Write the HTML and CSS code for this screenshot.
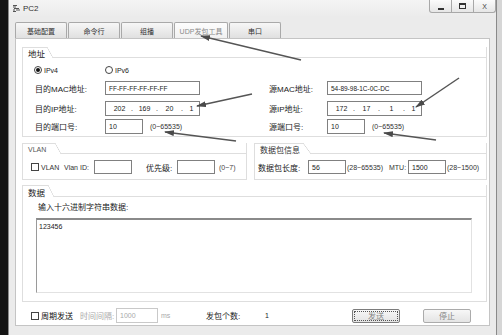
FILE: index.html
```html
<!DOCTYPE html>
<html lang="zh">
<head>
    <title>PC2</title>
    <meta charset="UTF-8" />
    <link rel="stylesheet" href="styles.css">
</head>
<body>
    <div class="screen">
        <div class="edge-left"></div>
        <div class="window">
            <div class="titlebar">
                <svg class="app-icon" width="9" height="9" viewBox="0 0 9 9">
                    <path d="M1 1.5h4M1 3h3M2 4.5h5M1 6h2M4 6h4M1 7.5h3" stroke="#555" stroke-width="1" fill="none"/>
                </svg>
                <span class="title">PC2</span>
                <div class="win-buttons">
                    <span class="wbtn"><span class="ico-min"></span></span>
                    <span class="wbtn"><span class="ico-max"></span></span>
                    <span class="wbtn close">X</span>
                </div>
            </div>

            <div class="tabs">
                <div class="tab">基础配置</div>
                <div class="tab">命令行</div>
                <div class="tab">组播</div>
                <div class="tab active">UDP发包工具</div>
                <div class="tab">串口</div>
            </div>

            <div class="panel">
                <div class="group addr">
                    <div class="group-head">
                        <span class="group-label big" style="width: 24px">地址</span>
                        <span class="group-slant"></span>
                        <span class="group-fill"></span>
                    </div>
                    <div class="addr-body">
                        <div class="radio-row">
                            <span class="radio checked"></span><span class="radio-text">IPv4</span>
                            <span class="radio"></span><span class="radio-text">IPv6</span>
                        </div>
                        <div class="addr-row mac-row">
                            <div class="half left">
                                <span class="lbl">目的MAC地址:</span>
                                <span class="field wide">FF-FF-FF-FF-FF-FF</span>
                            </div>
                            <div class="half right">
                                <span class="lbl">源MAC地址:</span>
                                <span class="field wide">54-89-98-1C-0C-DC</span>
                            </div>
                        </div>
                        <div class="addr-row ip-row">
                            <div class="half left">
                                <span class="lbl">目的IP地址:</span>
                                <span class="field wide ip">
                                    <span class="oct">202</span><span class="dot">.</span><span class="oct">169</span><span class="dot">.</span><span class="oct">20</span><span class="dot">.</span><span class="oct last">1</span>
                                </span>
                            </div>
                            <div class="half right">
                                <span class="lbl">源IP地址:</span>
                                <span class="field wide ip">
                                    <span class="oct">172</span><span class="dot">.</span><span class="oct">17</span><span class="dot">.</span><span class="oct">1</span><span class="dot">.</span><span class="oct last">1</span>
                                </span>
                            </div>
                        </div>
                        <div class="addr-row port-row">
                            <div class="half left">
                                <span class="lbl">目的端口号:</span>
                                <span class="field port">10</span>
                                <span class="range">(0~65535)</span>
                            </div>
                            <div class="half right">
                                <span class="lbl">源端口号:</span>
                                <span class="field port">10</span>
                                <span class="range">(0~65535)</span>
                            </div>
                        </div>
                    </div>
                </div>

                <div class="mid-row">
                    <div class="group vlan">
                        <div class="group-head">
                            <span class="group-label small" style="width: 32px">VLAN</span>
                            <span class="group-slant"></span>
                            <span class="group-fill"></span>
                        </div>
                        <div class="line-body">
                            <span class="checkbox"></span>
                            <span class="cb-text latin">VLAN</span>
                            <span class="vlan-id latin">Vlan ID:</span>
                            <span class="field short"></span>
                            <span class="prio">优先级:</span>
                            <span class="field short"></span>
                            <span class="range">(0~7)</span>
                        </div>
                    </div>
                    <div class="group pkt">
                        <div class="group-head">
                            <span class="group-label" style="width: 48px">数据包信息</span>
                            <span class="group-slant wide-slant"></span>
                            <span class="group-fill"></span>
                        </div>
                        <div class="line-body">
                            <span class="pkt-len">数据包长度:</span>
                            <span class="field short">56</span>
                            <span class="range pkt-range">(28~65535)</span>
                            <span class="mtu latin">MTU:</span>
                            <span class="field short">1500</span>
                            <span class="range tight">(28~1500)</span>
                        </div>
                    </div>
                </div>

                <div class="group data">
                    <div class="group-head tall">
                        <span class="group-label big" style="width: 25px">数据</span>
                        <span class="group-slant"></span>
                        <span class="group-fill"></span>
                    </div>
                    <div class="data-body">
                        <div class="data-label">输入十六进制字符串数据:</div>
                        <div class="hex-area">123456</div>
                    </div>
                </div>

                <div class="bottom-row">
                    <span class="checkbox"></span>
                    <span class="cycle">周期发送</span>
                    <span class="interval disabled">时间间隔:</span>
                    <span class="field interval-field disabled">1000</span>
                    <span class="ms disabled">ms</span>
                    <span class="count">发包个数:</span>
                    <span class="count-value">1</span>
                    <span class="btn focus">发送</span>
                    <span class="btn">停止</span>
                </div>
            </div>
        </div>
        <div class="edge-right"></div>
    </div>

    <svg class="arrows" width="502" height="335" viewBox="0 0 502 335">
        <defs>
            <marker id="head" viewBox="0 0 10 6" refX="9" refY="3" markerWidth="10" markerHeight="6" markerUnits="userSpaceOnUse" orient="auto">
                <path d="M0 0 L10 3 L0 6 Z" fill="#4a4a4a"/>
            </marker>
        </defs>
        <g stroke="#555" stroke-width="1.5" marker-end="url(#head)">
            <line x1="301" y1="60" x2="201" y2="36"/>
            <line x1="252" y1="94" x2="197" y2="106"/>
            <line x1="236" y1="141" x2="165" y2="132"/>
            <line x1="459" y1="78" x2="416" y2="107"/>
            <line x1="436" y1="140" x2="384" y2="133"/>
        </g>
    </svg>
</body>
</html>
```

FILE: styles.css
```css
* {
    box-sizing: border-box;
}
body {
    margin: 0;
    width: 502px;
    height: 335px;
    overflow: hidden;
    position: relative;
    font-family: "Liberation Sans", "Noto Sans CJK SC", sans-serif;
    font-size: 8px;
    color: #222;
    background: #161616;
}
.screen {
    display: flex;
    height: 335px;
}
.edge-left {
    width: 8px;
    background: #141414;
}
.edge-right {
    flex: 1;
    background: #d6d6d6;
}
.window {
    width: 489px;
    display: flex;
    flex-direction: column;
    background: #ebebeb;
    border-left: 1px solid #8a8a8a;
    border-right: 1px solid #8a8a8a;
    padding: 0 6px 9px 6px;
}

/* title bar */
.titlebar {
    height: 16px;
    margin: 0 -6px;
    padding-left: 3px;
    display: flex;
    align-items: center;
    background: linear-gradient(#f4f4f4, #ececec);
}
.app-icon {
    display: block;
}
.title {
    margin-left: 2px;
    color: #333;
    font-size: 8px;
}
.win-buttons {
    margin-left: auto;
    align-self: flex-start;
    display: flex;
}
.wbtn {
    width: 23px;
    height: 13px;
    border: 1px solid #a8a8a8;
    border-top: none;
    margin-left: -1px;
    background: linear-gradient(#fbfbfb, #e6e6e6);
    display: flex;
    align-items: center;
    justify-content: center;
    color: #444;
    font-size: 7px;
}
.wbtn:first-child {
    border-bottom-left-radius: 3px;
}
.wbtn:last-child {
    border-bottom-right-radius: 3px;
}
.ico-min {
    width: 6px;
    height: 2px;
    background: #333;
    margin-top: 5px;
}
.ico-max {
    width: 7px;
    height: 6px;
    border: 1px solid #333;
    border-top-width: 2px;
}

/* tabs */
.tabs {
    margin-top: 6px;
    height: 16px;
    display: flex;
    gap: 1px;
}
.tab {
    width: 52px;
    height: 16px;
    border: 1px solid #a9a9a9;
    border-bottom: none;
    border-radius: 2px 2px 0 0;
    background: linear-gradient(#f7f7f7, #e0e0e0);
    font-size: 7px;
    color: #333;
    display: flex;
    align-items: center;
    justify-content: center;
}
.tab.active {
    width: 54px;
    background: linear-gradient(#fdfdfd, #f1f1f1);
    color: #8a8a8a;
}

/* main panel */
.panel {
    height: 288px;
    background: #fff;
    border: 1px solid #c4c4c4;
    padding: 8px 2px 2px 6px;
}

/* group boxes with a folder-like caption */
.group {
    border: 1px solid #dedede;
    border-top: none;
}
.group-head {
    height: 11px;
    display: flex;
}
.group-head.tall {
    height: 12px;
}
.group-label {
    border-top: 1px solid #dedede;
    padding-left: 5px;
    display: flex;
    align-items: center;
    color: #333;
    white-space: nowrap;
}
.group-label.big {
    font-size: 8.5px;
    color: #222;
}
.group-label.small {
    font-size: 7px;
    color: #555;
}
.group-slant {
    width: 6px;
    background: linear-gradient(to top right, transparent calc(50% - 0.6px), #d4d4d4, transparent calc(50% + 0.6px));
}
.group-slant.wide-slant {
    width: 8px;
}
.group-fill {
    flex: 1;
    border-bottom: 1px solid #dedede;
}

.field {
    display: flex;
    align-items: center;
    height: 100%;
    border: 1px solid #808080;
    background: #fff;
    padding-left: 3px;
    font-size: 6.5px;
    color: #222;
    white-space: nowrap;
}
.range {
    margin-left: 7px;
    font-size: 7px;
    color: #333;
}
.latin {
    font-size: 7px;
}

/* address group */
.addr-body {
    padding: 5px 0 2px 12px;
}
.radio-row {
    height: 14px;
    display: flex;
    align-items: center;
    margin-left: -1px;
}
.radio {
    width: 8px;
    height: 8px;
    border: 1px solid #444;
    border-radius: 50%;
    background: #fff;
    display: flex;
    align-items: center;
    justify-content: center;
}
.radio.checked::after {
    content: "";
    width: 4px;
    height: 4px;
    border-radius: 50%;
    background: #111;
}
.radio-text {
    width: 61px;
    margin-left: 2px;
    font-size: 7px;
}
.addr-row {
    display: flex;
}
.mac-row {
    height: 14px;
    margin-top: 4px;
}
.ip-row {
    height: 15px;
    margin-top: 6px;
}
.port-row {
    height: 15px;
    margin-top: 3px;
}
.half {
    display: flex;
    align-items: center;
    height: 100%;
}
.half.left {
    width: 234px;
}
.half.left .lbl {
    width: 70px;
}
.half.right .lbl {
    width: 58px;
}
.field.wide {
    width: 95px;
}
.field.port {
    width: 38px;
    font-size: 7px;
}
.field.ip {
    padding-left: 3px;
    font-size: 7px;
}
.oct {
    width: 21px;
    text-align: center;
}
.oct.last {
    flex: 1;
}
.dot {
    width: 4px;
    text-align: center;
}

/* vlan and packet info */
.mid-row {
    margin-top: 6px;
    display: flex;
    gap: 7px;
}
.group.vlan {
    width: 225px;
}
.group.pkt {
    flex: 1;
}
.line-body {
    height: 25px;
    padding: 6px 0 5px 0;
    display: flex;
    align-items: center;
}
.line-body .field {
    height: 14px;
}
.vlan .line-body {
    padding-left: 8px;
}
.checkbox {
    width: 8px;
    height: 8px;
    border: 1px solid #444;
    background: #fff;
    flex: none;
}
.cb-text {
    width: 23px;
    margin-left: 2px;
    color: #333;
}
.vlan-id {
    width: 30px;
    color: #333;
}
.field.short {
    width: 38px;
    font-size: 7px;
}
.prio {
    width: 31px;
    margin-left: 14px;
}
.vlan .range {
    margin-left: 4px;
    color: #444;
}
.pkt .line-body {
    padding-left: 3px;
}
.pkt-len {
    width: 50px;
}
.range.pkt-range {
    margin-left: 1px;
    width: 42px;
}
.mtu {
    width: 19px;
    color: #333;
}
.range.tight {
    margin-left: 1px;
}

/* data group */
.group.data {
    margin-top: 5px;
}
.data-body {
    padding: 5px 14px 8px 13px;
}
.data-label {
    height: 12px;
    line-height: 12px;
    padding-left: 2px;
}
.hex-area {
    margin-top: 4px;
    height: 75px;
    border: 1px solid #e2e2e2;
    border-top: 2px solid #8a8a8a;
    border-left: 1px solid #9a9a9a;
    padding: 3px 2px;
    font-size: 7px;
    color: #222;
}

/* bottom controls */
.bottom-row {
    margin-top: 6px;
    height: 15px;
    padding-left: 9px;
    display: flex;
    align-items: center;
}
.cycle {
    width: 39px;
    margin-left: 2px;
    color: #111;
}
.disabled {
    color: #a9a9a9;
}
.interval {
    width: 36px;
}
.field.interval-field {
    width: 42px;
    border-color: #c9c9c9;
    color: #a9a9a9;
    font-size: 7px;
}
.ms {
    width: 45px;
    margin-left: 3px;
    font-size: 7px;
}
.count {
    width: 59px;
}
.count-value {
    flex: 1;
    font-size: 7px;
}
.btn {
    width: 48px;
    height: 14px;
    border: 1px solid #ababab;
    border-radius: 2px;
    background: linear-gradient(#f7f7f7, #e4e4e4);
    color: #858585;
    display: flex;
    align-items: center;
    justify-content: center;
    margin-right: 16px;
}
.btn.focus {
    border-color: #7c7c7c;
    outline: 1px dotted #555;
    outline-offset: -3px;
    margin-right: 23px;
}

.arrows {
    position: absolute;
    left: 0;
    top: 0;
    pointer-events: none;
}
```
